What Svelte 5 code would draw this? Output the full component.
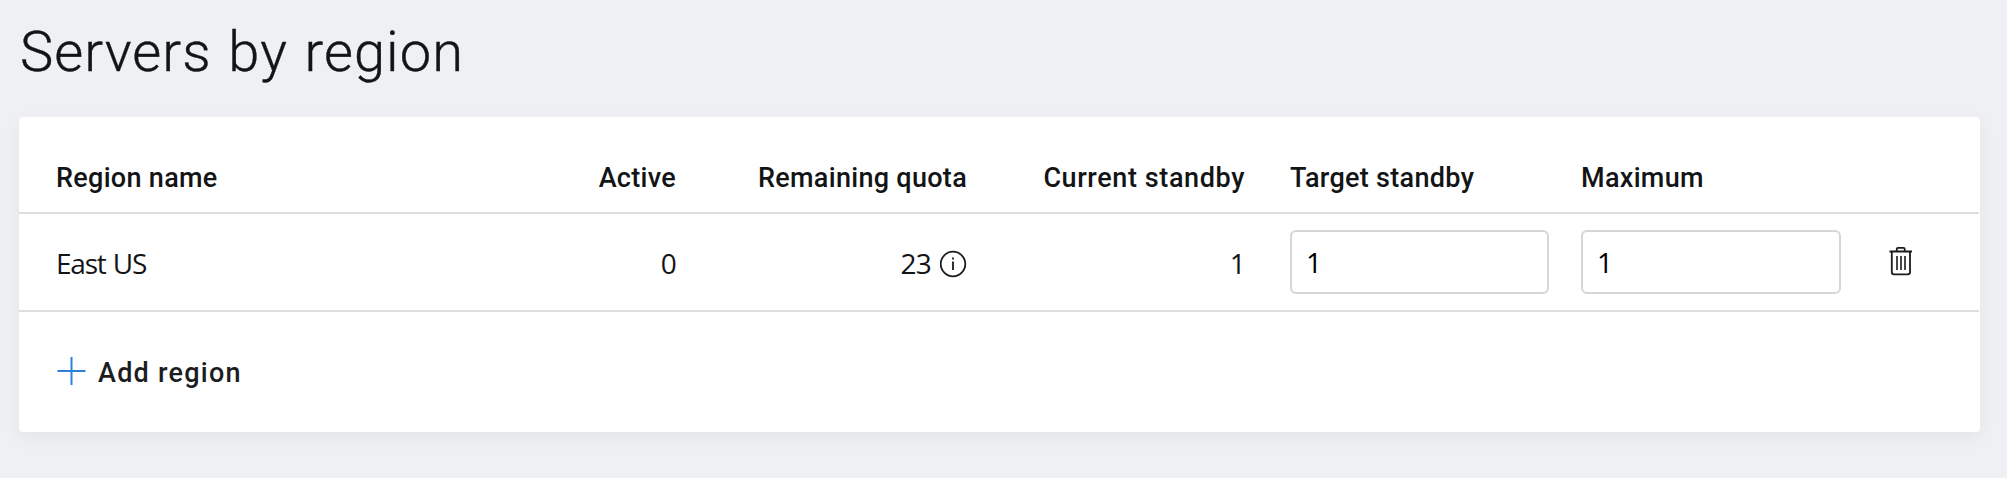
<script>
  let regions = $state([
    { name: 'East US', active: 0, quota: 23, standby: 1, target: '1', maximum: '1' }
  ]);
</script>

<main>
  <h1>Servers by region</h1>

  <section class="card">
    <div class="row head">
      <span class="name">Region name</span>
      <span class="num">Active</span>
      <span class="num">Remaining quota</span>
      <span class="num standby">Current standby</span>
      <span class="target">Target standby</span>
      <span class="maximum">Maximum</span>
    </div>

    {#each regions as region}
      <div class="row body">
        <span class="name">{region.name}</span>
        <span class="num">{region.active}</span>
        <span class="num with-icon">
          {region.quota}
          <svg width="27" height="28" viewBox="0 0 27 28" aria-hidden="true">
            <circle cx="13" cy="14" r="12.3" />
            <path d="M13 11.5V20M13 7.5V9.5" />
          </svg>
        </span>
        <span class="num">{region.standby}</span>
        <input class="target" type="text" bind:value={region.target} aria-label="Target standby" />
        <input class="maximum" type="text" bind:value={region.maximum} aria-label="Maximum" />
        <button class="remove" aria-label="Delete">
          <svg width="24" height="30" viewBox="0 0 24 30" aria-hidden="true">
            <path d="M0.5 5.5H23M7.8 5V2.8Q7.8 1.8 9 1.8H14.5Q15.7 1.8 15.7 2.8V5M2.8 5.5V26Q2.8 28.3 5 28.3H18.8Q21 28.3 21 26V5.5" />
            <path class="bars" d="M8 10V24M12 10V24M16 10V24" />
          </svg>
        </button>
      </div>
    {/each}

    <button class="add">
      <svg width="28" height="28" viewBox="0 0 28 28" aria-hidden="true">
        <path d="M0.5 13H28.5M14.5 -1V27" />
      </svg>
      <span>Add region</span>
    </button>
  </section>
</main>

<style>
  :global(body) {
    background: #eff0f3;
  }
  main {
    box-sizing: border-box;
    height: 478px;
    padding: 20px 27px 0 19px;
    color: #131416;
    font-family: Roboto, sans-serif;
    font-size: 28px;
  }
  h1 {
    margin: 0 0 33px 1px;
    font-size: 56px;
    line-height: 64px;
    font-weight: 300;
    letter-spacing: 1.05px;
    word-spacing: 2px;
    -webkit-text-stroke: 0.4px #131416;
  }
  .card {
    height: 315px;
    border-radius: 4px;
    background: #fff;
    box-shadow: 0 6px 20px rgba(0, 0, 0, 0.05);
  }
  .row {
    display: grid;
    grid-template-columns: 470px 187px 291px 278px 304px 292px 1fr;
    box-sizing: border-box;
    margin-right: 1px;
    border-bottom: 2px solid #dedede;
  }
  .head {
    height: 97px;
    padding-top: 43px;
    font-size: 27px;
    line-height: 36px;
    font-weight: 500;
    letter-spacing: 0.3px;
    white-space: nowrap;
  }
  .head .standby {
    letter-spacing: 0.6px;
  }
  .body {
    height: 98px;
    align-items: center;
    font-family: "Open Sans", sans-serif;
    letter-spacing: -0.8px;
  }
  .name {
    padding-left: 37px;
  }
  .body .name {
    letter-spacing: -1.2px;
    word-spacing: 1px;
  }
  .num {
    text-align: right;
  }
  .body .name,
  .body .num {
    padding-top: 2px;
  }
  .with-icon {
    display: flex;
    align-items: center;
    justify-content: flex-end;
    gap: 9px;
  }
  .with-icon svg {
    margin-top: 2px;
  }
  .target {
    margin-left: 45px;
  }
  .maximum {
    margin-left: 32px;
  }
  input {
    box-sizing: border-box;
    width: 260px;
    height: 64px;
    padding: 0 14px;
    border: 2px solid #d6d6d6;
    border-radius: 6px;
    background: #fff;
    color: #000;
    font: 28px "Open Sans", sans-serif;
  }
  input.target {
    width: 259px;
  }
  button {
    border: 0;
    padding: 0;
    background: none;
    color: #1d1d1f;
    font: inherit;
  }
  svg {
    display: block;
    fill: none;
    stroke: #1b1b1d;
    stroke-width: 1.8;
  }
  .remove {
    margin-left: 48px;
    padding-bottom: 2px;
    justify-self: start;
  }
  .bars {
    stroke-width: 1.6;
  }
  .add {
    display: flex;
    align-items: center;
    gap: 13px;
    height: 120px;
    padding-left: 38px;
    font-size: 27px;
    font-weight: 500;
    letter-spacing: 1.25px;
  }
  .add span {
    padding-top: 2px;
  }
  .add svg {
    overflow: visible;
    stroke: #2b80d8;
    stroke-width: 2;
  }
</style>
